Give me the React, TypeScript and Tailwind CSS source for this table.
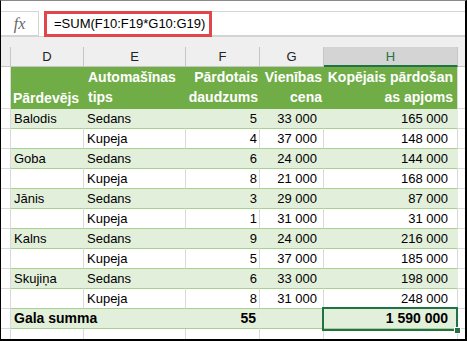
import React from "react";

const rows = [
  ["Balodis", "Sedans", "5", "33 000", "165 000"],
  ["", "Kupeja", "4", "37 000", "148 000"],
  ["Goba", "Sedans", "6", "24 000", "144 000"],
  ["", "Kupeja", "8", "21 000", "168 000"],
  ["Jānis", "Sedans", "3", "29 000", "87 000"],
  ["", "Kupeja", "1", "31 000", "31 000"],
  ["Kalns", "Sedans", "9", "24 000", "216 000"],
  ["", "Kupeja", "5", "37 000", "185 000"],
  ["Skujiņa", "Sedans", "6", "33 000", "198 000"],
  ["", "Kupeja", "8", "31 000", "248 000"],
];

const cols = "grid grid-cols-[10px_73px_102px_74px_64px_134px_1fr]";

function DataRow({ r, band }: { r: string[]; band: boolean }) {
  const bg = band ? "bg-[#e2efda]" : "bg-white";
  const vline = band ? "border-r-[#e2efda]" : "border-r-[#d9d9d9]";
  const cell = `h-[20px] border-r border-b border-b-[#a9d08e] ${vline} ${bg} leading-[19px] whitespace-nowrap`;
  return (
    <div className={cols}>
      <div className="h-[20px] border-r border-b border-[#d9d9d9] bg-white" />
      <div className={`${cell} pl-[3px]`}>{r[0]}</div>
      <div className={`${cell} pl-[3px]`}>{r[1]}</div>
      <div className={`${cell} pr-[2px] text-right`}>{r[2]}</div>
      <div className={`${cell} pr-[6px] text-right`}>{r[3]}</div>
      <div className={`${cell} border-r-[#d9d9d9] pr-[9px] text-right`}>{r[4]}</div>
      <div className="h-[20px] border-b border-[#d9d9d9] bg-white" />
    </div>
  );
}

export default function App() {
  const colHdr =
    "h-[20px] border-r border-b border-[#c6c6c6] bg-[#efefef] text-center leading-[19px] text-[#222]";
  const hdr = "h-[42px] bg-[#70ad47] text-[14px] font-bold leading-[20px] text-white whitespace-nowrap";
  return (
    <div className="h-[341px] w-[467px] overflow-hidden border-t border-l border-r-2 border-b-2 border-t-[#8a8a8a] border-l-black border-r-black border-b-black bg-white font-['Liberation_Sans',Arial,sans-serif] text-[13px] text-black">
      {/* formula bar */}
      <div className="flex h-[35px] bg-white">
        <div className="mt-[10px] flex h-[25px] w-[38px] items-center justify-center border-y border-r border-[#d4d4d4]">
          <span className="font-['Liberation_Serif',serif] text-[16px] italic text-[#666]">fx</span>
        </div>
        <div className="mt-[10px] ml-[5px] flex h-[25px] flex-1 border-y border-[#d4d4d4]">
          <div className="-my-px flex h-[26px] w-[168px] items-center border-[3px] border-[#e3464a] pl-[7px] text-[13px]">
            =SUM(F10:F19*G10:G19)
          </div>
        </div>
      </div>
      <div className="h-[11px] border-t border-[#d4d4d4] bg-[#efefef]" />
      {/* column letters */}
      <div className={cols}>
        <div className={colHdr} />
        <div className={colHdr}>D</div>
        <div className={colHdr}>E</div>
        <div className={colHdr}>F</div>
        <div className={colHdr}>G</div>
        <div className="h-[20px] border-r border-b-2 border-r-[#c6c6c6] border-b-[#217346] bg-[#d4d4d4] text-center leading-[19px] text-[#217346]">
          H
        </div>
        <div className="h-[20px] border-b border-[#c6c6c6] bg-[#efefef]" />
      </div>
      {/* table header */}
      <div className={cols}>
        <div className="h-[42px] border-r border-b border-[#d9d9d9] bg-white" />
        <div className={`${hdr} flex items-end pb-[1px] pl-[2px]`}>Pārdevējs</div>
        <div className={`${hdr} pl-[4px]`}>
          Automašīnas
          <br />
          tips
        </div>
        <div className={`${hdr} pr-[2px] text-right`}>
          Pārdotais
          <br />
          daudzums
        </div>
        <div className={`${hdr} pr-[2px] text-right`}>
          Vienības
          <br />
          cena
        </div>
        <div className={`${hdr} border-r border-r-[#d9d9d9] pr-[4px] text-right`}>
          Kopējais pārdošan
          <br />
          as apjoms
        </div>
        <div className="h-[42px] border-b border-[#d9d9d9] bg-white" />
      </div>
      {rows.map((r, i) => (
        <DataRow key={i} r={r} band={i % 2 === 0} />
      ))}
      {/* total */}
      <div className={cols}>
        <div className="h-[20px] border-r border-b border-[#d9d9d9] bg-white" />
        <div className="col-span-2 h-[20px] border-b border-[#a9d08e] bg-[#e2efda] pl-[3px] text-[14px] font-bold leading-[19px] whitespace-nowrap">
          Gala summa
        </div>
        <div className="h-[20px] border-r border-b border-r-[#e2efda] border-b-[#a9d08e] bg-[#e2efda] pr-[3px] text-right text-[14px] font-bold leading-[19px]">
          55
        </div>
        <div className="h-[20px] border-r border-b border-r-[#e2efda] border-b-[#a9d08e] bg-[#e2efda]" />
        <div className="relative h-[20px] border-r border-b border-r-[#d9d9d9] border-b-[#a9d08e] bg-[#e2efda] pr-[9px] text-right text-[14px] font-bold leading-[19px]">
          1 590 000
          <div className="absolute -top-[2px] -left-[2px] -right-[1px] -bottom-[3px] border-2 border-[#217346]" />
          <div className="absolute -right-[4px] -bottom-[6px] h-[7px] w-[7px] border border-white bg-[#217346]" />
        </div>
        <div className="h-[20px] border-b border-[#d9d9d9] bg-white" />
      </div>
      {/* empty row */}
      <div className={cols}>
        <div className="h-[10px] border-r border-[#d9d9d9]" />
        <div className="h-[10px] border-r border-[#d9d9d9]" />
        <div className="h-[10px] border-r border-[#d9d9d9]" />
        <div className="h-[10px] border-r border-[#d9d9d9]" />
        <div className="h-[10px] border-r border-[#d9d9d9]" />
        <div className="h-[10px] border-r border-[#d9d9d9]" />
        <div className="h-[10px]" />
      </div>
    </div>
  );
}
